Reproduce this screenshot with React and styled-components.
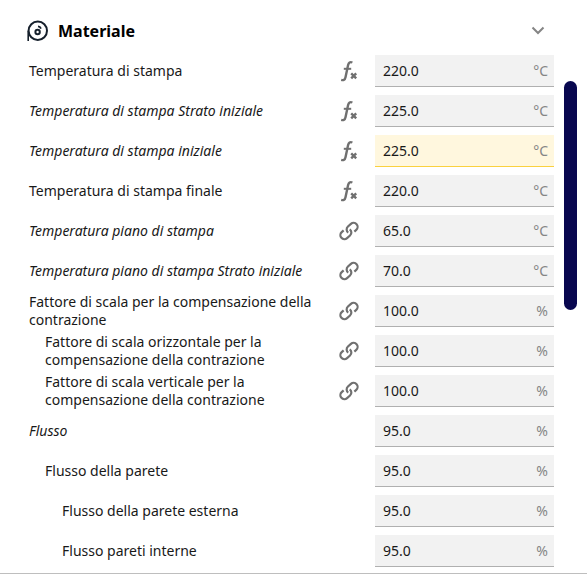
import React, { useState } from "react"
import styled, { createGlobalStyle } from "styled-components"

const GlobalStyle = createGlobalStyle`
    * {
        box-sizing: border-box;
    }
    body {
        margin: 0;
        background: #ffffff;
        color: #191919;
        font-family: "Noto Sans", sans-serif;
        font-size: 14px;
        line-height: 18px;
    }
`

const Panel = styled.main`
    display: flex;
    justify-content: space-between;
    column-gap: 10px;
    padding: 11px 10px 2px 27px;
    border-bottom: 1px solid #bebebe;
`

const Settings = styled.section`
    flex: 1;
    min-width: 0;
`

const CategoryButton = styled.button`
    display: flex;
    align-items: center;
    column-gap: 10px;
    width: 100%;
    height: 40px;
    padding: 0 8px 0 0;
    border: 0;
    background: transparent;
    color: #000000;
    font-family: inherit;
    font-size: 16px;
    font-weight: 700;
    text-align: left;
    cursor: pointer;
`

const CategoryTitle = styled.span`
    flex: 1;
`

const Row = styled.div`
    display: flex;
    align-items: center;
    height: 40px;
    padding-left: 2px;
`

const SettingLabel = styled.label`
    flex: 1;
    min-width: 0;
    padding-left: ${({ $depth }) => [0, 16, 33][$depth]}px;
    padding-right: 16px;
    font-style: ${({ $changed }) => ($changed ? "italic" : "normal")};
`

const IconSlot = styled.span`
    display: flex;
    justify-content: center;
    width: 22px;
    margin-right: 15px;
`

const Field = styled.div`
    display: flex;
    align-items: center;
    width: 179px;
    height: 32px;
    padding: 0 6px 0 8px;
    background: ${({ $warning }) => ($warning ? "#fff7de" : "#f2f2f2")};
    border-bottom: 1px solid ${({ $warning }) => ($warning ? "#fad13f" : "#b0b0b0")};
`

const ValueInput = styled.input`
    flex: 1;
    min-width: 0;
    padding: 0;
    border: 0;
    outline: 0;
    background: transparent;
    color: #191919;
    font: inherit;
`

const Unit = styled.span`
    color: #858585;
`

const ScrollTrack = styled.div`
    width: 13px;
    padding-top: 70px;
`

const ScrollThumb = styled.div`
    height: 229px;
    border-radius: 7px;
    background: #08074f;
`

const SpoolIcon = () => (
    <svg width="21" height="22" viewBox="0 0 21 22" fill="none" stroke="#16202c" aria-hidden="true">
        <circle cx="10.8" cy="10.8" r="9.2" strokeWidth="2" />
        <path d="M1.2 21V10.8" strokeWidth="1.6" />
        <circle cx="10.6" cy="12" r="2.2" strokeWidth="2" />
        <path d="M11 6.4q2.2.2 3 2.2" strokeWidth="1.8" />
    </svg>
)

const FunctionIcon = () => (
    <svg width="22" height="22" viewBox="0 0 22 22" fill="none" stroke="#707070" aria-hidden="true">
        <path d="M14.4 2.5c-2.3-1-3.7 0-4.3 2.6L7.5 17.2c-.6 2.6-1.8 3.4-4.3 2.7" strokeWidth="2.4" />
        <path d="M5.8 8.8h7.4" strokeWidth="2" />
        <path d="M13.2 13.3l5 5M18.2 13.3l-5 5" strokeWidth="2.4" />
    </svg>
)

const LinkIcon = () => (
    <svg width="22" height="22" viewBox="-11 -11 22 22" fill="none" stroke="#707070" strokeWidth="2.2" aria-hidden="true">
        <g transform="rotate(-42)">
            <path d="M3.6 4H6.2a4 4 0 0 0 0-8H2.2a4 4 0 0 0-3.9 4.8" />
            <path d="M-3.6-4H-6.2a4 4 0 0 0 0 8H-2.2a4 4 0 0 0 3.9-4.8" />
        </g>
    </svg>
)

const ChevronIcon = () => (
    <svg width="16" height="12" viewBox="0 0 16 12" fill="none" stroke="#858585" strokeWidth="2" aria-hidden="true">
        <path d="M2.5 2.5L8 8l5.5-5.5" />
    </svg>
)

const icons = {
    fx: FunctionIcon,
    link: LinkIcon,
}

const settings = [
    { id: "print", label: "Temperatura di stampa", value: "220.0", unit: "°C", icon: "fx" },
    { id: "print-layer0", label: "Temperatura di stampa Strato iniziale", value: "225.0", unit: "°C", icon: "fx", changed: true },
    { id: "print-initial", label: "Temperatura di stampa iniziale", value: "225.0", unit: "°C", icon: "fx", changed: true, warning: true },
    { id: "print-final", label: "Temperatura di stampa finale", value: "220.0", unit: "°C", icon: "fx" },
    { id: "bed", label: "Temperatura piano di stampa", value: "65.0", unit: "°C", icon: "link", changed: true },
    { id: "bed-layer0", label: "Temperatura piano di stampa Strato iniziale", value: "70.0", unit: "°C", icon: "link", changed: true },
    { id: "shrink", label: "Fattore di scala per la compensazione della contrazione", value: "100.0", unit: "%", icon: "link" },
    { id: "shrink-xy", label: "Fattore di scala orizzontale per la compensazione della contrazione", value: "100.0", unit: "%", icon: "link", depth: 1 },
    { id: "shrink-z", label: "Fattore di scala verticale per la compensazione della contrazione", value: "100.0", unit: "%", icon: "link", depth: 1 },
    { id: "flow", label: "Flusso", value: "95.0", unit: "%", changed: true },
    { id: "flow-wall", label: "Flusso della parete", value: "95.0", unit: "%", depth: 1 },
    { id: "flow-wall-outer", label: "Flusso della parete esterna", value: "95.0", unit: "%", depth: 2 },
    { id: "flow-wall-inner", label: "Flusso pareti interne", value: "95.0", unit: "%", depth: 2 },
]

const SettingRow = ({ id, label, value, unit, icon, changed, warning, depth = 0 }) => {
    const Icon = icons[icon]
    return (
        <Row>
            <SettingLabel htmlFor={id} $depth={depth} $changed={changed}>{label}</SettingLabel>
            <IconSlot>{Icon && <Icon />}</IconSlot>
            <Field $warning={warning}>
                <ValueInput id={id} type="text" inputMode="decimal" defaultValue={value} />
                <Unit>{unit}</Unit>
            </Field>
        </Row>
    )
}

const App = () => {
    const [open, setOpen] = useState(true)
    return (
        <>
            <GlobalStyle />
            <Panel>
                <Settings>
                    <CategoryButton type="button" aria-expanded={open} onClick={() => setOpen(!open)}>
                        <SpoolIcon />
                        <CategoryTitle>Materiale</CategoryTitle>
                        <ChevronIcon />
                    </CategoryButton>
                    {open && settings.map((setting) => <SettingRow key={setting.id} {...setting} />)}
                </Settings>
                <ScrollTrack>
                    <ScrollThumb />
                </ScrollTrack>
            </Panel>
        </>
    )
}

export default App
